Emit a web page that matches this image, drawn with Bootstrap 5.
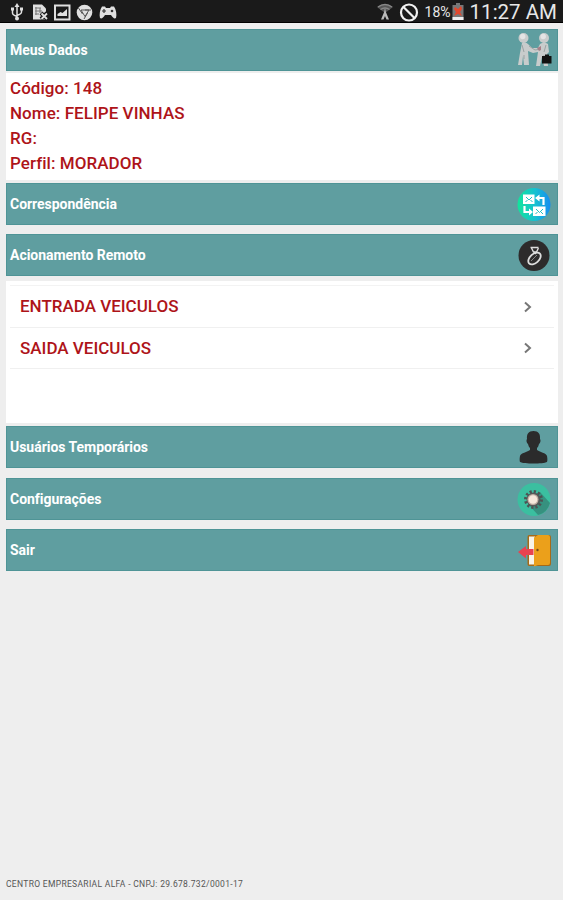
<!DOCTYPE html>
<html lang="pt-BR">
<head>
<meta charset="utf-8">
<meta name="viewport" content="width=device-width, initial-scale=1">
<title>Meus Dados</title>
<link href="https://cdn.jsdelivr.net/npm/bootstrap@5.3.0/dist/css/bootstrap.min.css" rel="stylesheet">
<style>
body{font-family:Roboto,"Liberation Sans",sans-serif;background:#eee;height:900px;overflow:hidden;font-variant-ligatures:none}
.status{height:23px;background:#1a1a1a;border-bottom:1px solid #000;color:#e8e8e8;flex:none}
.clock{font-size:20.5px;line-height:23px;padding:2px 6px 0 0}
.pct{font-size:14px;line-height:23px;padding:2px 0 0 2px}
.content{padding:5.5px 5px 0 6px}
.bar{height:42px;background:#5f9ea0;border:1px solid #4f9496;color:#fff;font-weight:700;font-size:14px;padding:0 4px 0 3px}
.bar span{padding-top:1px;letter-spacing:-.03px}
.bar svg{width:36px;height:38px;flex:none}
.panel{background:#fff;color:#ae1419;font-weight:500;font-size:17px}
.data{height:107px;margin:2px 0 3px;padding:3px 4px 0;line-height:25.2px;letter-spacing:.05px}
.remote{height:142px;margin:5px 0 3px;padding:4px 4px 0}
.remote .list-group-item{height:41.5px;padding:1px 21px 0 10px;border:0;border-bottom:1px solid #f0f0f0;color:inherit;background:none}
.remote .list-group{border-top:1px solid #f3f3f3}
.foot{font-size:8.5px;color:#555;padding:0 0 9px 6px;line-height:13px;letter-spacing:.32px}
.gap-bar{margin-bottom:9.5px}
</style>
</head>
<body class="d-flex flex-column">
<header class="status d-flex justify-content-between align-items-center">
<svg width="120" height="22" viewBox="0 0 120 22" fill="none" stroke="#e0e0e0" stroke-width="1.5">
<path d="M17 5v14M12.500 9v4q0 2 4.500 3.500M21.500 9v3q0 2-4.500 3.500"/><path d="M14.500 7L17 3l2.500 4zM11 7.500h3v3h-3zM20 7.500h3v3h-3z" fill="#e0e0e0" stroke="none"/><circle cx="17" cy="18.500" r="2" fill="#e0e0e0" stroke="none"/>
<path d="M33 4.500h9l4 4v11H33z" fill="#e0e0e0" stroke="none"/><path d="M35 8h6M35 11h7M35 14h4M36 7v8M40 8v5" stroke="#777" stroke-width="1"/><path d="M41 13l6 6M47 13l-6 6" stroke="#1a1a1a" stroke-width="4"/><path d="M41.500 13.500l5.500 5.500M47 13.500l-5.500 5.500" stroke-width="1.800"/>
<path d="M55 5.500h14.500v14H55z" stroke-width="2"/><path d="M57.500 16v-2l3-2 2 1 4.500-4v7z" fill="#e0e0e0" stroke="none"/>
<circle cx="84.500" cy="12.500" r="7.800" fill="#e0e0e0" stroke="none"/><path d="M81 10h8l-4 6.500zM78.500 8l4 6M85 10h6M87.500 13L84 19" stroke="#555" stroke-width="1"/>
<path d="M102 6.500h3l1 1.500h4l1-1.500h3c2 3 3 8 2 11.500-1.500 1-3 0-5-3h-6c-2 3-3.500 4-5 3-1-3.500 0-8.500 2-11.500z" fill="#e0e0e0" stroke="none"/><path d="M102 11h4M104 9v4" stroke="#333" stroke-width="1.200"/><circle cx="112" cy="11" r="1.300" fill="#333" stroke="none"/>
</svg>
<div class="d-flex align-items-center">
<svg width="46" height="22" viewBox="0 0 46 22" fill="none"><path d="M0 7q8-6 16 0l-8 6z" fill="#555"/><path d="M1 7q7-5 14 0M3.500 9.500q4.500-3 9 0M8 9v5" stroke="#888" stroke-width="1.400"/><path d="M8 10l4 9.500H9.500L8 16l-1.500 3.500H4z" fill="#bbb"/><circle cx="32" cy="12.500" r="8" stroke="#f0f0f0" stroke-width="2.200"/><path d="M26.500 7l11 11" stroke="#f0f0f0" stroke-width="2.200"/></svg>
<span class="pct">18%</span>
<svg width="19" height="22" viewBox="0 0 19 22"><path d="M5 3h4v2h3.500v15h-11V5H5z" fill="#777"/><path d="M1.500 17h11v3h-11z" fill="#eee"/><path d="M4 7l3 2 3-3 1 3-2 3 2 4-4-2-4 2 2-4-2-3z" fill="#e3472c"/></svg>
<span class="clock">11:27 AM</span>
</div>
</header>
<main class="content flex-grow-1">
<div class="bar d-flex align-items-center justify-content-between"><span>Meus Dados</span>
<svg viewBox="0 0 36 38"><g fill="#c9cccc"><path d="M5 12q3-2 6 1l4 4 6 0 2-4q4-3 8 0l1 8-2 2 1 12h-4l-2-9-2 9h-4l2-14-5 1-5-2 1 14H7l-1-9-1 9H1l2-12z"/><circle cx="6.500" cy="7" r="5"/><circle cx="27" cy="7" r="5"/></g><path d="M5 14l2 7M12 15l6 4 6-1M29 14l-2 7M7 24v4M27 24v5" stroke="#9ca3a3" fill="none"/><circle cx="5.700" cy="5.500" r="2.700" fill="#e4e4e4"/><circle cx="26.200" cy="5.500" r="2.700" fill="#e4e4e4"/><path d="M20 17l4-2v4l-2 1z" fill="#a77f88"/><path d="M25 25h9.500v7.500H25zM28 25v-1.500h4V25" fill="#111"/></svg></div>
<div class="panel data"><div>Código: 148</div><div><span>Nome: FELIPE VINHAS</span></div><div>RG:</div><div>Perfil: MORADOR</div></div>
<div class="bar gap-bar d-flex align-items-center justify-content-between"><span>Correspondência</span>
<svg viewBox="0 0 36 38"><defs><linearGradient id="g"><stop offset="0" stop-color="#12e59b"/><stop offset=".55" stop-color="#16bfd2"/><stop offset="1" stop-color="#158cf0"/></linearGradient></defs><circle cx="17" cy="19.500" r="16.500" fill="url(#g)"/><path d="M6 9.500h11.500v9.500H6zM16 21.500h12.500V31H16z" fill="#fff"/><path d="M9 12l3 3 3-3M8.500 17l2-2M15.500 17l-2-2M19 24l3.500 3.500 3.500-3.500M18.500 29l2-2M26 29l-2-2" fill="none" stroke="#20bfc5"/><path d="M20 13h6.500v7M14 27H7.500v-6" fill="none" stroke="#fff" stroke-width="2.200"/><path d="M22.500 9.500v7L18 13zM12 23.500v7l4-3.500z" fill="#fff"/></svg></div>
<div class="bar d-flex align-items-center justify-content-between"><span>Acionamento Remoto</span>
<svg viewBox="0 0 36 38"><circle cx="17" cy="19.500" r="15.500" fill="#2d2b2b"/><path d="M13.500 11.500h8M14.500 12l2 4h3l2-4M17 15.500l2 2.500" fill="none" stroke="#ddd" stroke-width="1.400"/><ellipse cx="17.500" cy="22.500" rx="7.300" ry="4.500" transform="rotate(-42 17.500 22.500)" fill="none" stroke="#ddd" stroke-width="1.800"/><path d="M14 25l6-6" stroke="#888" stroke-width="1"/></svg></div>
<div class="panel remote"><div class="list-group rounded-0">
<div class="list-group-item d-flex align-items-center justify-content-between"><span>ENTRADA VEICULOS</span><svg width="10" height="12" viewBox="0 0 10 12"><path d="M2 1.500L7 6l-5 4.500" fill="none" stroke="#777" stroke-width="2"/></svg></div>
<div class="list-group-item d-flex align-items-center justify-content-between"><span>SAIDA VEICULOS</span><svg width="10" height="12" viewBox="0 0 10 12"><path d="M2 1.500L7 6l-5 4.500" fill="none" stroke="#777" stroke-width="2"/></svg></div>
</div></div>
<div class="bar gap-bar d-flex align-items-center justify-content-between"><span>Usuários Temporários</span>
<svg viewBox="0 0 36 38"><path d="M16.500 3c5 0 7 3 6.500 8 1 1 .5 4-1 5-.5 2-1 3-2 4v2c5 3 9 3 10 6 .5 2 .5 5 0 6-4 2-23 2-27 0-.5-1-.5-4 0-6 1-3 5-3 10-6v-2c-1-1-1.500-2-2-4-1.500-1-2-4-1-5-.5-5 1.500-8 6.500-8z" fill="#2b2b2b"/></svg></div>
<div class="bar gap-bar d-flex align-items-center justify-content-between"><span>Configurações</span>
<svg viewBox="0 0 36 38"><circle cx="17" cy="19.500" r="16.500" fill="#3bbfa0"/><path d="M23 12l10 11q-3 10-12 12l-9-10z" fill="#36917f"/><circle cx="16.500" cy="19.500" r="7" fill="#555b5b"/><circle cx="16.500" cy="19.500" r="8" fill="none" stroke="#4d5353" stroke-width="3" stroke-dasharray="2.200 1.990"/><circle cx="16" cy="19.500" r="5.500" fill="#c3b0a5"/><circle cx="16" cy="19.500" r="4.300" fill="#f6e8dc"/></svg></div>
<div class="bar d-flex align-items-center justify-content-between"><span>Sair</span>
<svg viewBox="0 0 36 38"><path d="M12 4h20q2 0 2 2v27q0 2-2 2H12q-1.500 0-1.500-2V6q0-2 1.500-2z" fill="#a66a18"/><path d="M12 5.500h6v28h-6z" fill="#f7f3e8"/><path d="M17 6.500l4-2.500h10q2 0 2 2v26q0 2-2 2H21l-4 1.500z" fill="#eba01b"/><circle cx="20.500" cy="19" r="1.200" fill="#72491b"/><path d="M1 21l8-6v3h7.500v6H9v3.500z" fill="#e94350"/></svg></div>
</main>
<footer class="foot"><span>CENTRO EMPRESARIAL ALFA - CNPJ: 29.678.732/0001-17</span></footer>
<script src="https://cdn.jsdelivr.net/npm/bootstrap@5.3.0/dist/js/bootstrap.bundle.min.js"></script>
</body>
</html>
